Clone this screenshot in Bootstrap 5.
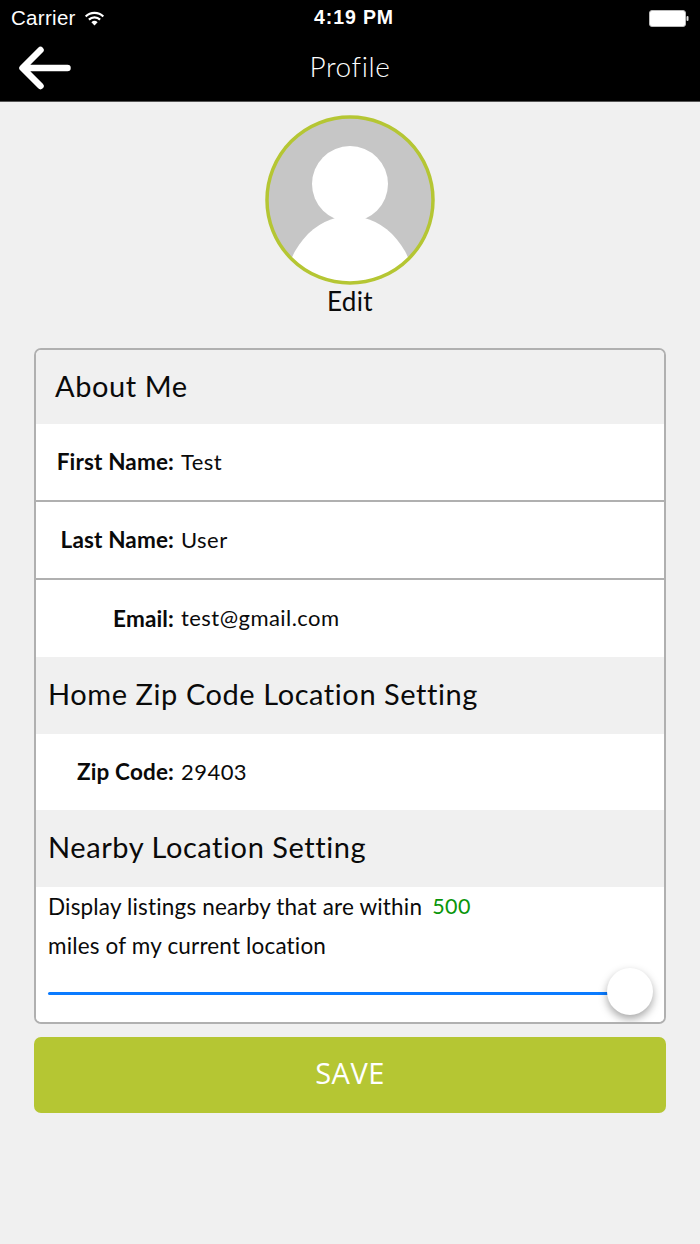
<!DOCTYPE html>
<html lang="en">
<head>
<meta charset="utf-8">
<title>Profile</title>
<link href="https://cdn.jsdelivr.net/npm/bootstrap@5.3.0/dist/css/bootstrap.min.css" rel="stylesheet">
<style>
html,body{height:100%;}
body{background:#f0f0f0;font-family:"Lato","Liberation Sans",sans-serif;color:#0a0a0a;width:700px;height:1244px;overflow:hidden;}
.top-head{background:#000;color:#fff;height:102px;border-bottom:1px solid #555;}
.status-row{height:36px;padding:0 11px;font-family:"Liberation Sans",sans-serif;font-size:20.500px;}
.status-carrier{letter-spacing:.3px;}
.status-time{font-weight:700;font-size:19.500px;letter-spacing:.9px;margin-left:8px;}
.status-side{width:120px;}
.title-row{height:65px;padding:0 19px 2px;}
.back-slot{width:120px;}
.page-title{font-size:28px;font-weight:300;line-height:1;letter-spacing:.6px;padding-bottom:3px;color:#fff;}
.avatar-wrap{padding-top:13px;height:246px;}
.avatar-edit{font-size:26px;line-height:30px;font-weight:400;margin-top:1px;letter-spacing:.4px;}
.form-box{margin:0 34px;border:2px solid #b0b0b0;border-radius:7px;overflow:hidden;background:#fff;height:676px;}
.sect-head{background:#f0f0f0;font-size:29px;line-height:1;height:77px;padding:0 0 4px 12px;letter-spacing:.57px;}
.sect-head.first{height:74px;padding-left:19px;}
.info-row{background:#fff;height:76px;font-size:22px;letter-spacing:.45px;padding-bottom:2px;}
.info-row.lined{height:78px;border-bottom:2px solid #b0b0b0;}
.info-row.mid{height:77px;}
.info-row.zip{height:76px;}
.info-label{width:138px;text-align:right;font-weight:700;font-size:22.500px;letter-spacing:.15px;flex:none;padding-top:2px;}
.info-val{margin-left:7px;font-weight:400;}
.near-body{background:#fff;padding:0 12px;height:135px;font-size:22.500px;}
.near-line{height:39px;letter-spacing:.17px;}
.near-val{color:#0a960a;font-size:21.500px;margin-left:10px;letter-spacing:.5px;}
.slide-wrap{height:47px;margin-top:3px;}
.slide-track{height:3px;background:#0a7bff;border-radius:2px;margin-top:4px;}
.slide-thumb{position:absolute;right:-1px;top:0;width:46px;height:47px;border-radius:50%;background:#fff;box-shadow:0 4px 8px rgba(0,0,0,.35);}
.save-btn{display:block;margin:13px 34px 0;width:632px;height:76px;background:#b5c633;border:0;border-radius:7px;color:#fff;font-size:29px;letter-spacing:.5px;font-family:"Open Sans","Liberation Sans",sans-serif;padding:0 0 4px;}
.save-btn:hover,.save-btn:active{background:#b5c633!important;color:#fff!important;}
</style>
</head>
<body>
<header class="top-head">
  <div class="status-row d-flex align-items-center justify-content-between">
    <div class="status-side d-flex align-items-center">
      <span class="status-carrier me-2">Carrier</span>
      <svg width="21" height="15" viewBox="0 0 20 15"><path d="M1.200 5.500a12.600 12.600 0 0 1 17.600 0" fill="none" stroke="#fff" stroke-width="2.200"/><path d="M4.400 8.600a8 8 0 0 1 11.200 0" fill="none" stroke="#fff" stroke-width="2.200"/><path d="M10 14.500 6.900 11.300a4.500 4.500 0 0 1 6.200 0z" fill="#fff"/></svg>
    </div>
    <div class="status-time">4:19 PM</div>
    <div class="status-side d-flex justify-content-end">
      <svg width="40" height="17" viewBox="0 0 40 17"><rect x=".5" y=".5" width="36" height="16" rx="2.500" fill="#fff" stroke="#bbb"/><rect x="37.500" y="6" width="2" height="5" rx="1" fill="#ddd"/></svg>
    </div>
  </div>
  <div class="title-row d-flex align-items-center justify-content-between">
    <div class="back-slot">
      <svg class="d-block" width="53" height="44" viewBox="0 0 53 44"><path d="M48.500 22H4M21.500 4 3.500 22 21.500 40" fill="none" stroke="#fff" stroke-width="6.500" stroke-linecap="round" stroke-linejoin="round"/></svg>
    </div>
    <div class="page-title">Profile</div>
    <div class="back-slot"></div>
  </div>
</header>
<main>
  <div class="avatar-wrap d-flex flex-column align-items-center">
    <svg width="170" height="170" viewBox="0 0 170 170">
      <defs><clipPath id="avaclip"><circle cx="85" cy="85" r="83"/></clipPath></defs>
      <circle cx="85" cy="85" r="83" fill="#c6c6c6"/>
      <g clip-path="url(#avaclip)" fill="#fff">
        <circle cx="85" cy="69" r="38"/>
        <ellipse cx="85" cy="180" rx="66" ry="79"/>
        <path d="M20 170 26.500 147H143.500L150 170z"/>
      </g>
      <circle cx="85" cy="85" r="83" fill="none" stroke="#b5c633" stroke-width="3.500"/>
    </svg>
    <div class="avatar-edit">Edit</div>
  </div>
  <section class="form-box d-flex flex-column">
    <div class="sect-head first d-flex align-items-center">About Me</div>
    <div class="info-row lined d-flex align-items-center"><span class="info-label">First Name:</span><span class="info-val">Test</span></div>
    <div class="info-row lined d-flex align-items-center"><span class="info-label">Last Name:</span><span class="info-val">User</span></div>
    <div class="info-row mid d-flex align-items-center"><span class="info-label">Email:</span><span class="info-val">test@gmail.com</span></div>
    <div class="sect-head d-flex align-items-center">Home Zip Code Location Setting</div>
    <div class="info-row zip d-flex align-items-center"><span class="info-label">Zip Code:</span><span class="info-val">29403</span></div>
    <div class="sect-head d-flex align-items-center">Nearby Location Setting</div>
    <div class="near-body">
      <div class="near-line d-flex align-items-center">Display listings nearby that are within<span class="near-val">500</span></div>
      <div class="near-line d-flex align-items-center">miles of my current location</div>
      <div class="slide-wrap position-relative d-flex align-items-center"><div class="slide-track flex-grow-1"></div><div class="slide-thumb"></div></div>
    </div>
  </section>
  <button type="button" class="btn save-btn">SAVE</button>
</main>
<script src="https://cdn.jsdelivr.net/npm/bootstrap@5.3.0/dist/js/bootstrap.bundle.min.js"></script>
</body>
</html>
